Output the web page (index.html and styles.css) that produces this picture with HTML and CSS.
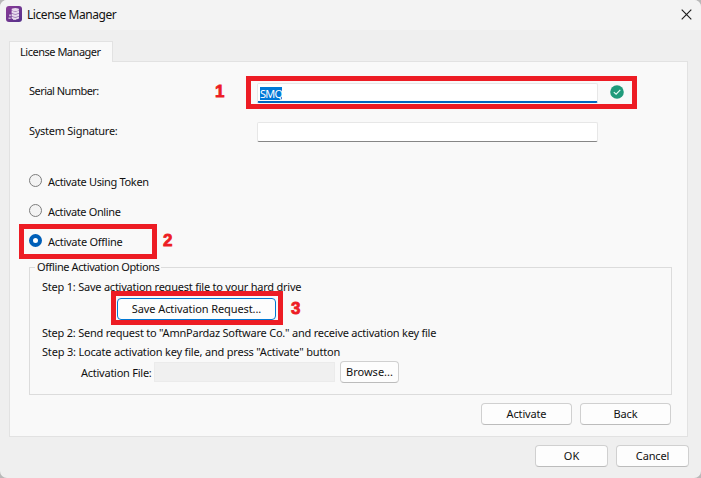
FILE: index.html
```html
<!DOCTYPE html>
<html lang="en">
<head>
<meta charset="utf-8">
<title>License Manager</title>
<link rel="stylesheet" href="styles.css">
</head>
<body>
<div class="window">
  <header class="titlebar">
    <svg class="logo" viewBox="0 0 16 16"><defs><linearGradient id="g" x2="1" y2="1"><stop stop-color="#8c3c98"/><stop offset="1" stop-color="#54318a"/></linearGradient></defs><rect width="16" height="16" rx="3" fill="url(#g)"/><g fill="#e7d9ec"><ellipse cx="9.3" cy="3.6" rx="3.7" ry="1.5"/><path d="M5.6 4.6q3.7 1.8 7.4 0v2.5q-3.7 1.8-7.4 0zM5.6 7.6q3.7 1.8 7.4 0v2.5q-3.7 1.8-7.4 0zM5.6 10.6q3.7 1.8 7.4 0v2q-3.7 1.8-7.4 0z"/><path d="M3 8.5h2v1.7H3zM2.5 11.5h2.2v1.6H2.5zM7 12h3v2H7z" opacity=".75"/></g></svg>
    <span class="title">License Manager</span>
    <svg class="close" viewBox="0 0 11 11"><path d="M.7.7l9.6 9.6M10.3.7L.7 10.3" stroke="#1c1c1c" stroke-width="1.15"/></svg>
  </header>
  <div class="tab"><span class="w-tab">License Manager</span></div>
  <main class="panel">
    <div class="field first"><label class="w-serial">Serial Number:</label>
      <div class="input focused"><span class="selection">SMQ</span></div>
      <svg class="check" viewBox="0 0 14 14"><circle cx="7" cy="7" r="6.8" fill="#209b7b"/><path d="M3.8 7.1l2.3 2.1 4.2-4.4" fill="none" stroke="#e8fff8" stroke-width="1.1"/></svg>
      <div class="mark mark-one"><b>1</b></div>
    </div>
    <div class="field second"><label class="w-system">System Signature:</label><div class="input"></div></div>
    <div class="radios">
      <div class="radio"><i></i><span class="w-token">Activate Using Token</span></div>
      <div class="radio"><i></i><span class="w-online">Activate Online</span></div>
      <div class="radio chosen"><i></i><span class="w-offline">Activate Offline</span><div class="mark mark-two"><b>2</b></div></div>
    </div>
    <fieldset class="group">
      <legend><span class="w-options">Offline Activation Options</span></legend>
      <p class="step one"><span class="w-step1">Step 1: Save activation request file to your hard drive</span></p>
      <div class="save-row"><button class="save"><span class="w-save">Save Activation Request...</span></button><div class="mark mark-three"><b>3</b></div></div>
      <p class="step two"><span class="w-step2">Step 2: Send request to "AmnPardaz Software Co." and receive activation key file</span></p>
      <p class="step three"><span class="w-step3">Step 3: Locate activation key file, and press "Activate" button</span></p>
      <div class="file-row"><label class="w-file">Activation File:</label><div class="file"></div><button class="browse"><span class="w-browse">Browse...</span></button></div>
    </fieldset>
    <div class="actions"><button><span class="w-activate">Activate</span></button><button><span class="w-back">Back</span></button></div>
  </main>
  <footer class="footer"><button><span class="w-ok">OK</span></button><button><span class="w-cancel">Cancel</span></button></footer>
</div>
</body>
</html>
```
FILE: styles.css
```css
* { box-sizing: border-box; }
body { margin: 0; background: #b9b9b9; font: 11px/14px "Noto Sans", sans-serif; color: #111; }
.window { width: 701px; height: 478px; background: #efefef; border-radius: 7px; overflow: hidden; }
.titlebar { height: 30px; background: #f3f3f3; display: flex; align-items: center; padding: 0 9px 2px 6px; }
.logo { width: 16px; height: 16px; margin-right: 5px; }
.title { font-size: 12px; line-height: 16px; margin-top: 2px; white-space: nowrap; letter-spacing: -.43px; }
.close { width: 11px; height: 11px; margin-left: auto; }
.tab { position: relative; width: 104px; height: 21px; margin: 11px 0 -1px 9px; padding: 3px 0 0 10px; background: #f9f9f9; border: 1px solid #e2e2e2; border-bottom: 0; white-space: nowrap; }
.panel { width: 679px; height: 376px; margin-left: 9px; background: #f9f9f9; border: 1px solid #e2e2e2; padding: 0 14px 0 19px; }
.field { position: relative; display: flex; white-space: nowrap; }
.field label { width: 228px; }
.first { height: 20px; margin-top: 21px; }
.first label { margin-top: 1px; }
.second { height: 20px; margin-top: 19px; }
.second label { margin-top: 2px; }
.input { width: 341px; height: 20px; background: #fff; border: 1px solid #e7e7e7; border-bottom-color: #868686; border-radius: 2px; padding: 3px 2px; }
.focused { border-bottom: 2px solid #0067c0; }
.selection { display: block; width: 22px; height: 13px; line-height: 13px; background: #0078d7; color: #fff; letter-spacing: -.8px; }
.check { width: 14px; height: 14px; margin: 2px 0 0 12px; }
.mark { position: absolute; border: 5px solid #ed1c24; }
.mark b { position: absolute; color: #ed1c24; font: bold 17px/20px "Liberation Sans", sans-serif; -webkit-text-stroke: .8px #ed1c24; }
.mark-one { left: 217px; top: -7px; width: 391px; height: 33px; }
.mark-one b { left: -36px; top: 1px; }
.radios { margin-top: 32px; }
.radio { position: relative; display: flex; height: 30px; white-space: nowrap; }
.radio i { width: 13px; height: 13px; margin: 0 6px 0 0; border: 1px solid #7d7d7d; border-radius: 50%; background: #f3f3f3; }
.radio span { margin-top: 1px; }
.chosen i { border: 4px solid #005fb8; background: #fff; }
.mark-two { left: -10px; top: -10px; width: 138px; height: 35px; }
.mark-two b { left: 139px; top: 2px; }
.group { position: relative; width: 643px; height: 135px; margin: -4px 0 0; padding: 0; border: 1px solid #dcdcdc; white-space: nowrap; }
.group legend { margin-left: 5px; padding: 0 2px; height: 14px; }
.step { height: 14px; margin: 0 0 0 12px; }
.one { margin-top: 6px; }
.save-row { position: relative; margin: 4px 0 0 87px; height: 22px; }
button { height: 22px; padding: 0; border: 1px solid #d0d0d0; border-bottom-color: #bcbcbc; border-radius: 4px; background: #fdfdfd; font: inherit; color: inherit; text-align: center; }
button span { display: block; }
.save { width: 159px; border-color: #0078d4; display: block; }
.mark-three { left: -6px; top: -7px; width: 172px; height: 34px; }
.mark-three b { left: 175px; top: 3px; }
.two { margin-top: 6px; }
.three { margin-top: 5px; }
.file-row { display: flex; margin: 2px 0 0 51px; }
.file-row label { width: 73px; margin-top: 5px; }
.file { width: 181px; height: 20px; margin: 1px 5px 0 0; background: #f0f0f0; border: 1px solid #ebebeb; }
.browse { width: 59px; }
.actions { display: flex; justify-content: flex-end; gap: 8px; margin: 8px 2px 0 0; }
.actions button { width: 91px; }
.footer { display: flex; justify-content: flex-end; gap: 8px; margin: 8px 12px 0 0; }
.footer button { width: 73px; }
.w-tab { letter-spacing: -.48px; }
.w-serial { letter-spacing: -.55px; }
.w-system { letter-spacing: -.27px; }
.w-token { letter-spacing: -.33px; }
.w-online { letter-spacing: -.36px; }
.w-offline { letter-spacing: -.27px; }
.w-options { letter-spacing: -.39px; }
.w-step1, .w-step2 { letter-spacing: -.225px; }
.w-step3 { letter-spacing: -.19px; }
.w-save { letter-spacing: -.09px; }
.w-file { letter-spacing: -.25px; }
.w-activate, .w-back, .w-cancel { letter-spacing: -.15px; }
```
